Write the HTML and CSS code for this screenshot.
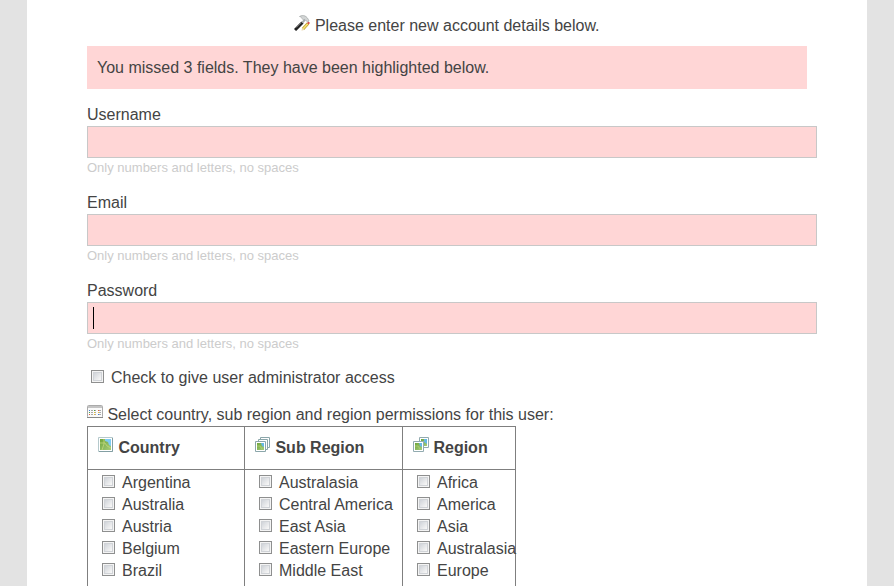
FILE: index.html
```html
<!DOCTYPE html>
<html lang="en">
<head>
<meta charset="utf-8">
<title>New account</title>
<link rel="stylesheet" href="styles.css">
</head>
<body>
<svg class="defs" aria-hidden="true">
  <defs>
    <linearGradient id="land" x1="0" y1="0" x2="1" y2="1">
      <stop offset="0" stop-color="#6fa53c"/><stop offset="1" stop-color="#a5cc7b"/>
    </linearGradient>
    <symbol id="map" viewBox="0 0 16 16">
      <path d="M.5.5h14v14H.5z" fill="#fff" stroke="#b5c9cc"/>
      <path d="M14.500 1v13.500H1" fill="none" stroke="#839fa3"/>
      <path d="M2 2h11v11H2z" fill="url(#land)"/>
      <path d="M7 2h6v7l-2-1-1-3-3-1z" fill="#7fcbf3"/>
      <path d="M2 6h5l2 3 4 2M6 2v5l-2 6" fill="none" stroke="#c3d87c" stroke-width=".8"/>
    </symbol>
    <symbol id="maps" viewBox="0 0 16 16">
      <path d="M5.500.5h9v10h-9z" fill="#fff" stroke="#8ba6aa"/>
      <path d="M3.500 2.500h9v10h-9z" fill="#fff" stroke="#8ba6aa"/>
      <path d="M.5 4.500h10v10H.5z" fill="#fff" stroke="#8ba6aa"/>
      <path d="M2 6h7v7H2z" fill="url(#land)"/>
      <path d="M6 6h3v4L7 9z" fill="#65b8e5"/>
      <path d="M2 9h3l2 3" fill="none" stroke="#b9d47a" stroke-width=".7"/>
    </symbol>
    <symbol id="regions" viewBox="0 0 16 16">
      <path d="M6.500.5h9v10h-9z" fill="#fff" stroke="#92abb0"/>
      <path d="M8 2h6v7H8z" fill="url(#land)"/>
      <path d="M11 2h3v5l-3-2z" fill="#65b8e5"/>
      <path d="M.5 4.500h10v10H.5z" fill="#fff" stroke="#92abb0"/>
      <path d="M2 6h7v7H2z" fill="url(#land)"/>
      <path d="M6 6h3v4L7 9z" fill="#65b8e5"/>
      <path d="M2 9h3l2 3" fill="none" stroke="#b9d47a" stroke-width=".7"/>
    </symbol>
  </defs>
</svg>
<main class="page">
  <form>
    <p class="intro">
      <svg class="icon" viewBox="0 0 16 16" aria-hidden="true">
        <path d="M9 14 14 8.500" stroke="#b59a28" stroke-width="3"/>
        <path d="M9 14 14 8.500" stroke="#f6df70" stroke-width="1.800"/>
        <path d="m13 8 1.500-1.500L16 8l-1.500 1.500z" fill="#d94f48"/>
        <path d="m8 13 2 2-2.500.8z" fill="#eadbb9"/>
        <path d="M1 15 8.500 7.500" stroke="#222" stroke-width="3"/>
        <path d="m2.500 12.500 5-5" stroke="#777" stroke-width=".8"/>
        <path d="m8.500 7.500 2.500-3" stroke="#a8acac" stroke-width="2"/>
        <path d="M5.500 1.500C9-.5 13 .5 15 6l-1.500 1L11 4.500 9.500 5 8 3.500C8 2.500 7 2 5.500 1.500z" fill="#d2d5d5" stroke="#a0a5a5" stroke-width=".7"/>
      </svg>
      Please enter new account details below.
    </p>
    <p class="alert" role="alert">You missed 3 fields. They have been highlighted below.</p>

    <div class="field">
      <label for="username">Username</label>
      <input class="text" id="username" type="text">
      <small>Only numbers and letters, no spaces</small>
    </div>
    <div class="field">
      <label for="email">Email</label>
      <input class="text" id="email" type="text">
      <small>Only numbers and letters, no spaces</small>
    </div>
    <div class="field">
      <label for="password">Password</label>
      <div class="entry">
        <input class="text" id="password" type="password">
        <span class="caret"></span>
      </div>
      <small>Only numbers and letters, no spaces</small>
    </div>

    <label class="check admin"><input type="checkbox">Check to give user administrator access</label>

    <p class="prompt">
      <svg class="icon" viewBox="0 0 16 16" aria-hidden="true">
        <rect x=".5" y="1.500" width="15" height="12" rx="1" fill="#fafafa" stroke="#aaa"/>
        <path d="M1 2h14v2H1z" fill="#c4c4c4"/>
        <path d="M0 13.500h16" stroke="#888"/>
        <path d="M4 6.500h2M8 10.500h1M12 8.500h2M4 10.500h2M8 6.500h1M12 10.500h2M4 8.500h2M8 8.500h1M12 6.500h2" stroke="#aaa"/>
        <path d="M2 6.500h1M11 10.500h1" stroke="#4379dc"/>
        <path d="M2 8.500h1M7 6.500h1" stroke="#45a346"/>
        <path d="M2 10.500h1M11 6.500h1" stroke="#e35b3f"/>
        <path d="M7 8.500h1M11 8.500h1M7 10.500h1" stroke="#e7bd36"/>
      </svg>
      Select country, sub region and region permissions for this user:
    </p>
    <table>
      <thead>
        <tr>
          <th class="country" scope="col"><svg class="icon" aria-hidden="true"><use href="#map"/></svg> Country</th>
          <th class="subregion" scope="col"><svg class="icon" aria-hidden="true"><use href="#maps"/></svg> Sub Region</th>
          <th class="region" scope="col"><svg class="icon" aria-hidden="true"><use href="#regions"/></svg> Region</th>
        </tr>
      </thead>
      <tbody>
        <tr>
          <td>
            <label class="check"><input type="checkbox">Argentina</label>
            <label class="check"><input type="checkbox">Australia</label>
            <label class="check"><input type="checkbox">Austria</label>
            <label class="check"><input type="checkbox">Belgium</label>
            <label class="check"><input type="checkbox">Brazil</label>
          </td>
          <td>
            <label class="check"><input type="checkbox">Australasia</label>
            <label class="check"><input type="checkbox">Central America</label>
            <label class="check"><input type="checkbox">East Asia</label>
            <label class="check"><input type="checkbox">Eastern Europe</label>
            <label class="check"><input type="checkbox">Middle East</label>
          </td>
          <td>
            <label class="check"><input type="checkbox">Africa</label>
            <label class="check"><input type="checkbox">America</label>
            <label class="check"><input type="checkbox">Asia</label>
            <label class="check"><input type="checkbox">Australasia</label>
            <label class="check"><input type="checkbox">Europe</label>
          </td>
        </tr>
      </tbody>
    </table>
  </form>
</main>
</body>
</html>
```
FILE: styles.css
```css
* {
  box-sizing: border-box;
}

body {
  margin: 0;
  background: #e3e3e3;
  color: #444;
  font: 16px/22px "Liberation Sans", Arial, sans-serif;
}

p {
  margin: 0;
}

.defs {
  position: absolute;
  width: 0;
  height: 0;
}

.page {
  max-width: 840px;
  min-height: 100vh;
  margin: 0 auto;
  padding: 15px 60px 0;
  background: #fff;
}

.icon {
  width: 16px;
  height: 16px;
  vertical-align: 0;
  fill: none;
}

.intro {
  margin-bottom: 9px;
  text-align: center;
}

.alert {
  margin-bottom: 15px;
  padding: 11px 10px 10px;
  background: #ffd6d6;
}

.field {
  margin: 0 -10px 14px 0;
}

.field label,
.field small {
  display: block;
}

.field small {
  color: #ccc;
  font-size: 13px;
  line-height: 20px;
}

.text {
  display: block;
  width: 100%;
  height: 32px;
  padding: 5px;
  border: 1px solid #c8c8c8;
  background: #ffd6d6;
  color: #444;
  font: inherit;
}

.entry {
  position: relative;
}

.caret {
  position: absolute;
  top: 5px;
  left: 6px;
  width: 1px;
  height: 22px;
  background: #000;
}

.check {
  display: flex;
  gap: 7px;
  padding-left: 14px;
  white-space: nowrap;
}

.check input {
  appearance: none;
  flex: none;
  width: 13px;
  height: 13px;
  margin: 3px 0 0;
  border: 1px solid #8e8f8f;
  background: linear-gradient(135deg, #c4c9d0, #f5f5f5 75%);
  box-shadow: inset 0 0 0 1px #f4f4f4, inset 0 0 0 2px #d0d3d7;
}

.admin {
  margin: -1px 0 15px;
  padding-left: 4px;
}

table {
  border-collapse: collapse;
  table-layout: fixed;
  width: 428px;
}

th,
td {
  border: 1px solid #7f7f7f;
}

th {
  padding: 10px;
  text-align: left;
  white-space: nowrap;
}

td {
  padding: 2px 0 4px;
  border-bottom: 0;
}

.country {
  width: 157px;
}

.subregion {
  width: 158px;
}

.region {
  width: 113px;
}
```
